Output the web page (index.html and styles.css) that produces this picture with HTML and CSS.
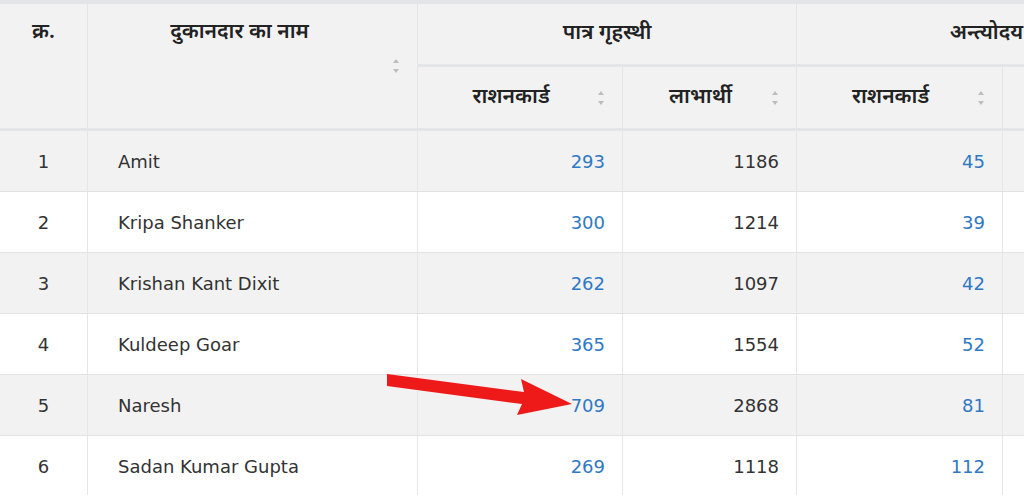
FILE: index.html
```html
<!DOCTYPE html>
<html lang="hi">
<head>
<meta charset="utf-8">
<title>राशन विवरण</title>
<link rel="stylesheet" href="styles.css">
</head>
<body>
<div class="wrap">
<table class="grid">
  <colgroup>
    <col class="w-no"><col class="w-name"><col class="w-a"><col class="w-b"><col class="w-c"><col class="w-d">
  </colgroup>
  <thead>
    <tr>
      <th rowspan="2" class="top">क्र.</th>
      <th rowspan="2" class="top sort name-h">दुकानदार का नाम</th>
      <th colspan="2" class="group">पात्र गृहस्थी</th>
      <th colspan="2" class="group">अन्त्योदय</th>
    </tr>
    <tr>
      <th class="sort sub">राशनकार्ड</th>
      <th class="sort sub">लाभार्थी</th>
      <th class="sort sub">राशनकार्ड</th>
      <th class="sub"></th>
    </tr>
  </thead>
  <tbody>
    <tr class="odd"><td class="no">1</td><td class="nm">Amit</td><td class="num"><a>293</a></td><td class="num">1186</td><td class="num"><a>45</a></td><td></td></tr>
    <tr><td class="no">2</td><td class="nm">Kripa Shanker</td><td class="num"><a>300</a></td><td class="num">1214</td><td class="num"><a>39</a></td><td></td></tr>
    <tr class="odd"><td class="no">3</td><td class="nm">Krishan Kant Dixit</td><td class="num"><a>262</a></td><td class="num">1097</td><td class="num"><a>42</a></td><td></td></tr>
    <tr><td class="no">4</td><td class="nm">Kuldeep Goar</td><td class="num"><a>365</a></td><td class="num">1554</td><td class="num"><a>52</a></td><td></td></tr>
    <tr class="odd"><td class="no">5</td><td class="nm">Naresh</td><td class="num"><a>709</a></td><td class="num">2868</td><td class="num"><a>81</a></td><td></td></tr>
    <tr><td class="no">6</td><td class="nm">Sadan Kumar Gupta</td><td class="num"><a>269</a></td><td class="num">1118</td><td class="num"><a>112</a></td><td></td></tr>
  </tbody>
</table>
<svg class="arrow" width="200" height="50" viewBox="380 370 200 50" aria-hidden="true">
  <polygon fill="#ee1a1a" points="387,374 524,392 521,379 572,404 517,415 522,404 387,386"/>
</svg>
</div>
</body>
</html>
```

FILE: styles.css
```css
html, body {
  margin: 0;
  padding: 0;
  background: #ffffff;
  overflow: hidden;
}

.wrap {
  position: relative;
  width: 1024px;
  height: 495px;
  overflow: hidden;
}

.grid {
  border-collapse: separate;
  border-spacing: 0;
  table-layout: fixed;
  width: 1176px;
  border-top: 4px solid #e3e4e8;
  font-family: "DejaVu Sans", Verdana, sans-serif;
  font-size: 18px;
  color: #333333;
}

.w-no { width: 87px; }
.w-name { width: 330px; }
.w-a { width: 205px; }
.w-b { width: 174px; }
.w-c { width: 206px; }
.w-d { width: 174px; }

th {
  position: relative;
  box-sizing: border-box;
  background: #f2f2f2;
  color: #222222;
  font-family: "Noto Sans Devanagari", "Lohit Devanagari", "Mangal", "Noto Sans", sans-serif;
  font-size: 21px;
  font-weight: 600;
  line-height: 30px;
  text-align: center;
  border-left: 1px solid #e4e4e6;
  border-bottom: 3px solid #e4e5e9;
  padding: 0 10px;
  white-space: nowrap;
}

th:first-child { border-left: none; }

th.top {
  vertical-align: top;
  padding-top: 14px;
}

th.name-h { padding-right: 36px; }

th.group {
  height: 63px;
  vertical-align: middle;
}

th.sub {
  height: 64px;
  vertical-align: middle;
  padding-right: 28px;
}

tr + tr th.sub:first-child { border-left: 1px solid #e4e4e6; }

th.sort::before,
th.sort::after {
  content: "";
  position: absolute;
  right: 18px;
  top: 50%;
  width: 0;
  height: 0;
  border-left: 3px solid transparent;
  border-right: 3px solid transparent;
}

th.sort::before {
  margin-top: -7px;
  border-bottom: 4px solid #bdbdbd;
}

th.sort::after {
  margin-top: 3px;
  border-top: 4px solid #bdbdbd;
}

td {
  box-sizing: border-box;
  height: 61px;
  border-left: 1px solid #e6e6e6;
  border-bottom: 1px solid #e2e2e2;
  vertical-align: middle;
  padding: 1px 18px 0;
  white-space: nowrap;
}

td:first-child { border-left: none; }

tbody tr.odd td { background: #f2f2f2; }

td.no { text-align: center; padding: 1px 0 0; }
td.nm { padding-left: 30px; }
td.num { text-align: right; padding-right: 17px; }

td a {
  color: #2f78c4;
  text-decoration: none;
}

.arrow {
  position: absolute;
  left: 380px;
  top: 370px;
}
```
